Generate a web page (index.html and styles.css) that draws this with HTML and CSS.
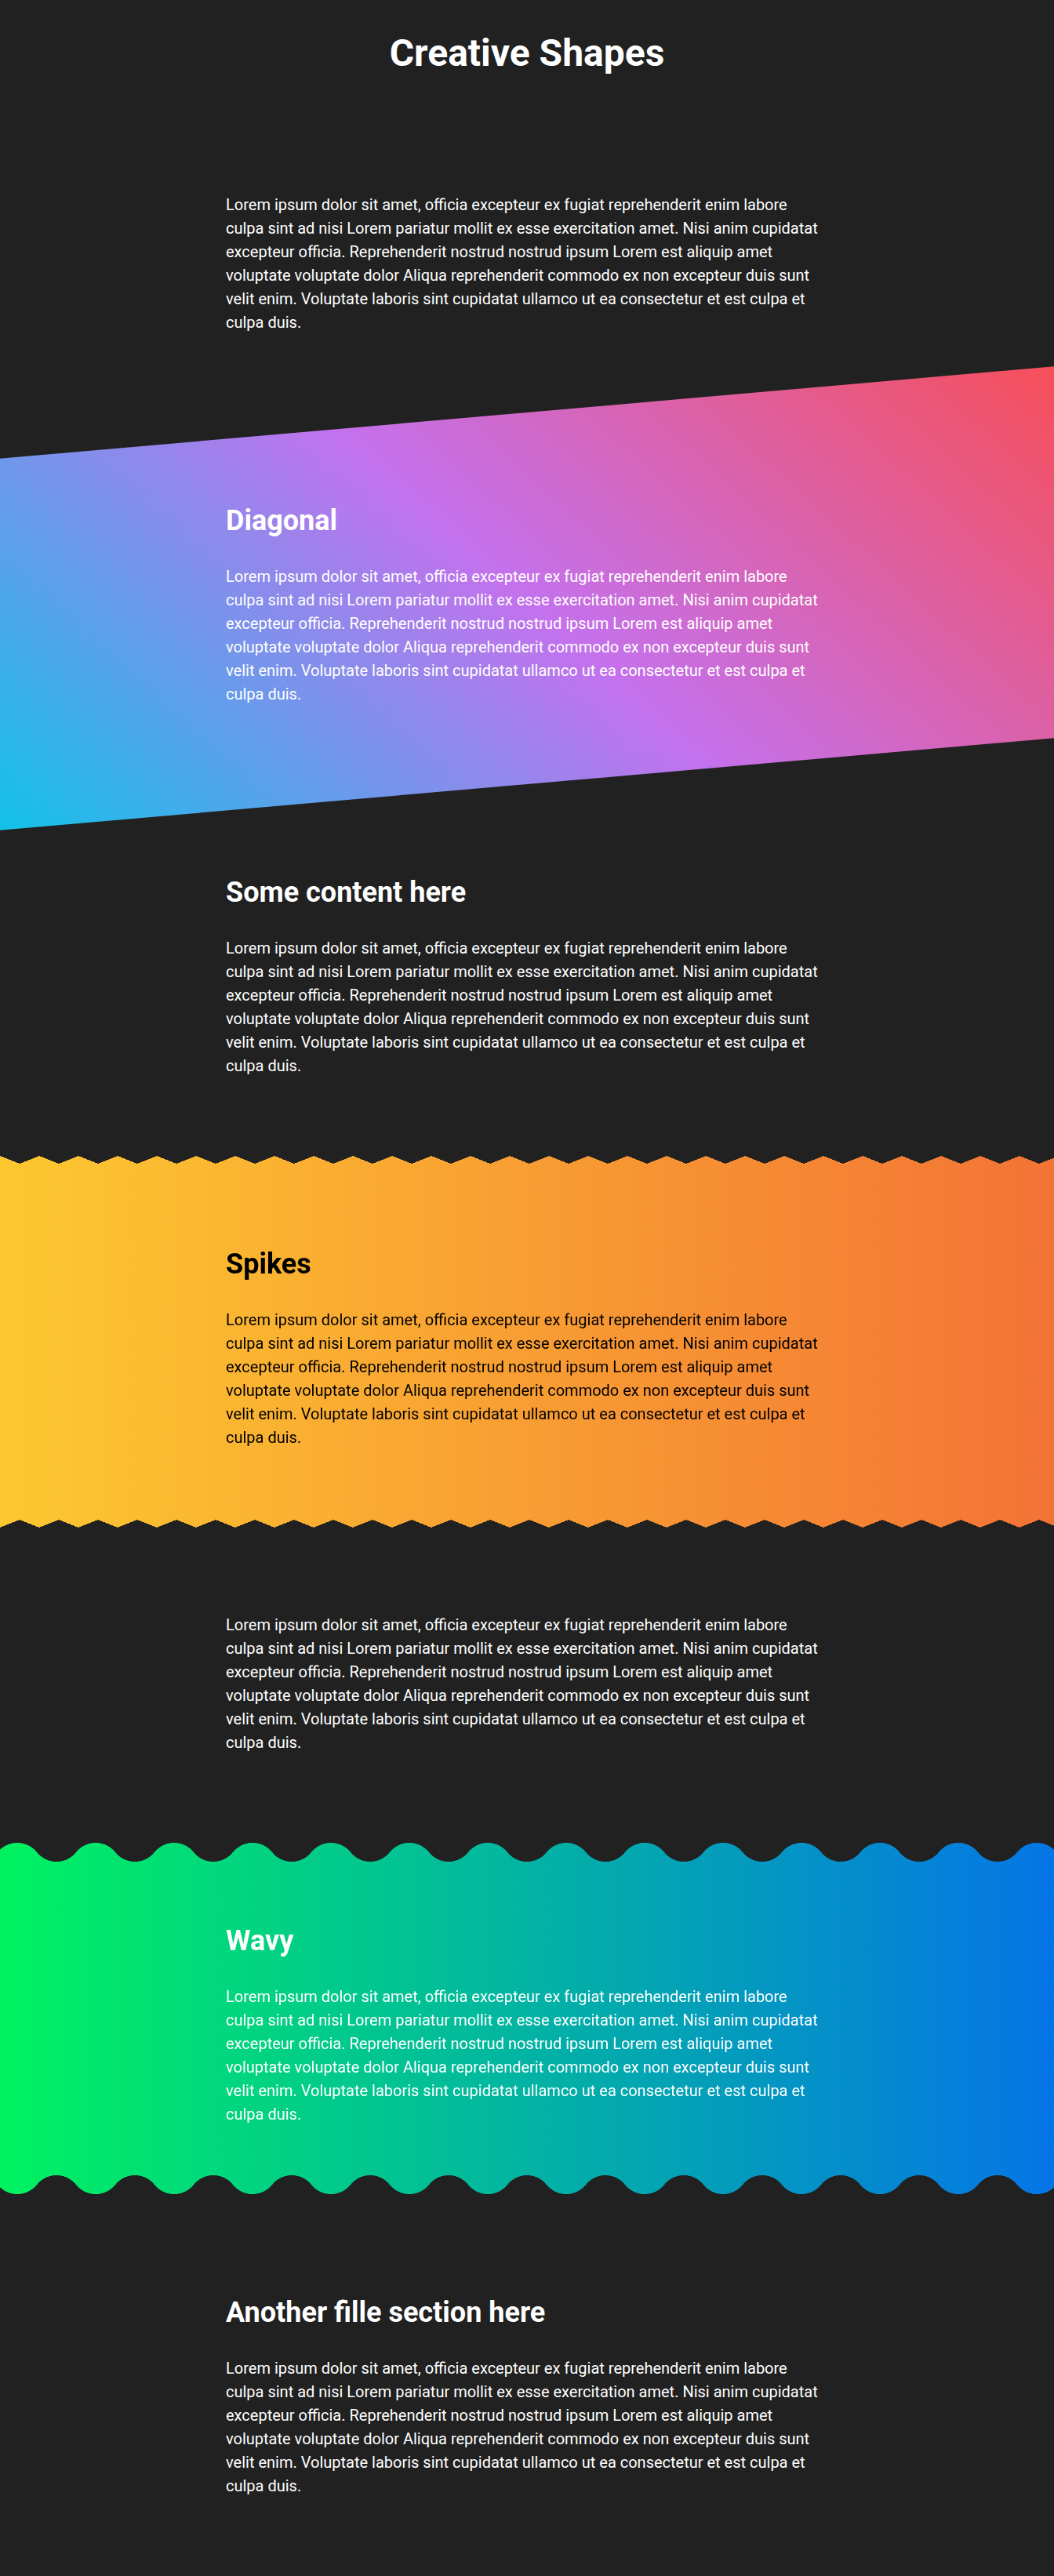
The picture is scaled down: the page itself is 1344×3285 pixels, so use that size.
FILE: index.html
```html
<!DOCTYPE html>
<html lang="en">
<head>
<meta charset="utf-8">
<title>Creative Shapes</title>
<link rel="stylesheet" href="styles.css">
</head>
<body>
  <header class="page-header">
    <h1 class="page-title">Creative Shapes</h1>
  </header>

  <section class="block">
    <div class="container">
      <p>Lorem ipsum dolor sit amet, officia excepteur ex fugiat reprehenderit enim labore culpa sint ad nisi Lorem pariatur mollit ex esse exercitation amet. Nisi anim cupidatat excepteur officia. Reprehenderit nostrud nostrud ipsum Lorem est aliquip amet voluptate voluptate dolor Aliqua reprehenderit commodo ex non excepteur duis sunt velit enim. Voluptate laboris sint cupidatat ullamco ut ea consectetur et est culpa et culpa duis.</p>
    </div>
  </section>

  <section class="block diagonal">
    <div class="container">
      <h2 class="block-title">Diagonal</h2>
      <p>Lorem ipsum dolor sit amet, officia excepteur ex fugiat reprehenderit enim labore culpa sint ad nisi Lorem pariatur mollit ex esse exercitation amet. Nisi anim cupidatat excepteur officia. Reprehenderit nostrud nostrud ipsum Lorem est aliquip amet voluptate voluptate dolor Aliqua reprehenderit commodo ex non excepteur duis sunt velit enim. Voluptate laboris sint cupidatat ullamco ut ea consectetur et est culpa et culpa duis.</p>
    </div>
  </section>

  <section class="block">
    <div class="container">
      <h2 class="block-title">Some content here</h2>
      <p>Lorem ipsum dolor sit amet, officia excepteur ex fugiat reprehenderit enim labore culpa sint ad nisi Lorem pariatur mollit ex esse exercitation amet. Nisi anim cupidatat excepteur officia. Reprehenderit nostrud nostrud ipsum Lorem est aliquip amet voluptate voluptate dolor Aliqua reprehenderit commodo ex non excepteur duis sunt velit enim. Voluptate laboris sint cupidatat ullamco ut ea consectetur et est culpa et culpa duis.</p>
    </div>
  </section>

  <section class="block spikes">
    <div class="container">
      <h2 class="block-title">Spikes</h2>
      <p>Lorem ipsum dolor sit amet, officia excepteur ex fugiat reprehenderit enim labore culpa sint ad nisi Lorem pariatur mollit ex esse exercitation amet. Nisi anim cupidatat excepteur officia. Reprehenderit nostrud nostrud ipsum Lorem est aliquip amet voluptate voluptate dolor Aliqua reprehenderit commodo ex non excepteur duis sunt velit enim. Voluptate laboris sint cupidatat ullamco ut ea consectetur et est culpa et culpa duis.</p>
    </div>
  </section>

  <section class="block">
    <div class="container">
      <p>Lorem ipsum dolor sit amet, officia excepteur ex fugiat reprehenderit enim labore culpa sint ad nisi Lorem pariatur mollit ex esse exercitation amet. Nisi anim cupidatat excepteur officia. Reprehenderit nostrud nostrud ipsum Lorem est aliquip amet voluptate voluptate dolor Aliqua reprehenderit commodo ex non excepteur duis sunt velit enim. Voluptate laboris sint cupidatat ullamco ut ea consectetur et est culpa et culpa duis.</p>
    </div>
  </section>

  <section class="block wavy">
    <div class="container">
      <h2 class="block-title">Wavy</h2>
      <p>Lorem ipsum dolor sit amet, officia excepteur ex fugiat reprehenderit enim labore culpa sint ad nisi Lorem pariatur mollit ex esse exercitation amet. Nisi anim cupidatat excepteur officia. Reprehenderit nostrud nostrud ipsum Lorem est aliquip amet voluptate voluptate dolor Aliqua reprehenderit commodo ex non excepteur duis sunt velit enim. Voluptate laboris sint cupidatat ullamco ut ea consectetur et est culpa et culpa duis.</p>
    </div>
  </section>

  <section class="block">
    <div class="container">
      <h2 class="block-title">Another fille section here</h2>
      <p>Lorem ipsum dolor sit amet, officia excepteur ex fugiat reprehenderit enim labore culpa sint ad nisi Lorem pariatur mollit ex esse exercitation amet. Nisi anim cupidatat excepteur officia. Reprehenderit nostrud nostrud ipsum Lorem est aliquip amet voluptate voluptate dolor Aliqua reprehenderit commodo ex non excepteur duis sunt velit enim. Voluptate laboris sint cupidatat ullamco ut ea consectetur et est culpa et culpa duis.</p>
    </div>
  </section>
</body>
</html>
```

FILE: styles.css
```css
*,
*::before,
*::after {
  box-sizing: border-box;
}

html,
body {
  margin: 0;
  padding: 0;
}

body {
  background: #212121;
  color: #ffffff;
  font-family: Roboto, "Liberation Sans", Arial, sans-serif;
  font-size: 20px;
  line-height: 1.5;
}

.page-header {
  padding: 39px 0 40px;
  text-align: center;
}

.page-title {
  margin: 0;
  font-size: 48px;
  line-height: 58px;
  font-weight: 700;
}

.container {
  width: 768px;
  margin: 0 auto;
}

.block {
  padding: 109px 0 100px;
}

.block p {
  margin: 0;
}

.block-title {
  margin: 2px 0 29px;
  font-size: 36px;
  line-height: 54px;
  font-weight: 700;
}

/* Diagonal */
.diagonal {
  position: relative;
  isolation: isolate;
}

.diagonal::after {
  content: "";
  position: absolute;
  inset: 0;
  z-index: -1;
  background: linear-gradient(45deg, #12c2e9, #c471ed, #f64f59);
  transform: skewY(-5deg);
}

/* Spikes */
.spikes {
  color: #000000;
  background: linear-gradient(to right, #fdc830, #f37335);
  --spikes-mask:
    conic-gradient(from -68.2deg at 50% 100%, #0000 136.4deg, #000 137deg) 0 0 / 50px 10px repeat-x,
    linear-gradient(#000 0 0) 0 10px / 100% calc(100% - 20px) no-repeat,
    conic-gradient(from 111.8deg at 50% 0, #0000 136.4deg, #000 137deg) 0 100% / 50px 10px repeat-x;
  -webkit-mask: var(--spikes-mask);
  mask: var(--spikes-mask);
}

/* Wavy */
.wavy {
  background: linear-gradient(to right, #00f260, #0575e6);
  --wave-mask:
    radial-gradient(32px at 50% 45px, #000 99%, #0000 101%) calc(50% - 50px) 0 / 100px 50% repeat-x,
    radial-gradient(32px at 50% -20px, #0000 99%, #000 101%) 50% 25px / 100px calc(50% - 25px) repeat-x,
    radial-gradient(32px at 50% calc(100% - 45px), #000 99%, #0000 101%) calc(50% - 50px) 100% / 100px 50% repeat-x,
    radial-gradient(32px at 50% calc(100% + 20px), #0000 99%, #000 101%) 50% calc(100% - 25px) / 100px calc(50% - 25px) repeat-x;
  -webkit-mask: var(--wave-mask);
  mask: var(--wave-mask);
}
```
